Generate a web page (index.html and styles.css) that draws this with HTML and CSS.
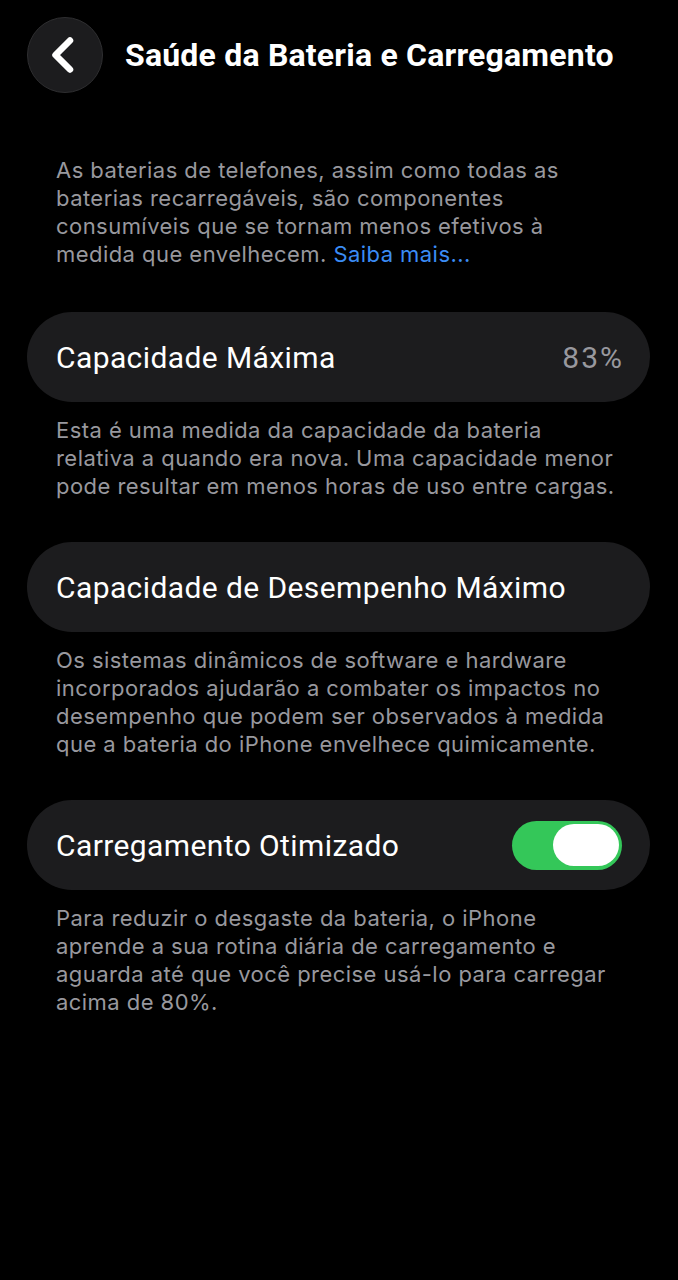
FILE: index.html
```html
<!DOCTYPE html>
<html lang="pt-BR">
<head>
<meta charset="utf-8">
<link rel="stylesheet" href="styles.css">
</head>
<body>
<div class="screen">
  <header class="nav">
    <button class="back" aria-label="Voltar">
      <svg width="26" height="40" viewBox="0 0 26 40"><path d="M20 5.5 L5.5 20 L20 34.5" fill="none" stroke="#fff" stroke-width="6.5" stroke-linecap="round" stroke-linejoin="round"/></svg>
    </button>
    <h1 class="title">Saúde da Bateria e Carregamento</h1>
  </header>

  <p class="note intro">As baterias de telefones, assim como todas as<br>baterias recarregáveis, são componentes<br>consumíveis que se tornam menos efetivos à<br>medida que envelhecem. <a class="link">Saiba mais...</a></p>

  <div class="card">
    <span class="label">Capacidade Máxima</span>
    <span class="value">83%</span>
  </div>
  <p class="note">Esta é uma medida da capacidade da bateria<br>relativa a quando era nova. Uma capacidade menor<br>pode resultar em menos horas de uso entre cargas.</p>

  <div class="card">
    <span class="label">Capacidade de Desempenho Máximo</span>
  </div>
  <p class="note">Os sistemas dinâmicos de software e hardware<br>incorporados ajudarão a combater os impactos no<br>desempenho que podem ser observados à medida<br>que a bateria do iPhone envelhece quimicamente.</p>

  <div class="card">
    <span class="label">Carregamento Otimizado</span>
    <span class="toggle"><span class="knob"></span></span>
  </div>
  <p class="note">Para reduzir o desgaste da bateria, o iPhone<br>aprende a sua rotina diária de carregamento e<br>aguarda até que você precise usá-lo para carregar<br>acima de 80%.</p>
</div>
</body>
</html>
```

FILE: styles.css
```css
html, body {
  margin: 0;
  padding: 0;
  background: #000;
}
body {
  font-family: Roboto, "Liberation Sans", sans-serif;
  color: #fff;
  width: 678px;
  height: 1280px;
  overflow: hidden;
}
.screen {
  padding: 17px 28px 0 27px;
}
.nav {
  display: flex;
  align-items: center;
  gap: 22px;
  height: 76px;
}
.back {
  width: 76px;
  height: 76px;
  border-radius: 50%;
  background: #1c1c1e;
  border: 1.5px solid #2e2e30;
  display: flex;
  align-items: center;
  justify-content: center;
  padding: 0 4px 0 0;
  flex: none;
}
.title {
  margin: 0;
  font-size: 32px;
  font-weight: 700;
  letter-spacing: 0.2px;
  color: #fff;
  white-space: nowrap;
}
.note {
  margin: 0;
  padding: 0 28px 0 29px;
  font-family: Inter, Roboto, sans-serif;
  font-size: 22px;
  letter-spacing: 0.45px;
  line-height: 28px;
  color: #98989e;
  white-space: nowrap;
}
.intro {
  margin-top: 63px;
  margin-bottom: 44px;
}
.link {
  color: #3b8cf5;
}
.card {
  height: 90px;
  border-radius: 45px;
  background: #1c1c1e;
  display: flex;
  align-items: center;
  justify-content: space-between;
  padding: 0 28px 0 29px;
  margin-bottom: 14px;
  margin-right: 0;
}
.label {
  font-size: 30px;
  color: #fff;
  letter-spacing: 0.4px;
}
.value {
  font-size: 30px;
  color: #98989e;
  letter-spacing: 2px;
  margin-right: -2px;
}
.card + .note {
  margin-bottom: 42px;
}
.toggle {
  width: 110px;
  height: 49px;
  border-radius: 25px;
  background: #34c759;
  display: flex;
  align-items: center;
  justify-content: flex-end;
  padding: 0 3px;
  box-sizing: border-box;
}
.knob {
  width: 66px;
  height: 42px;
  border-radius: 21px;
  background: #fff;
}
```
